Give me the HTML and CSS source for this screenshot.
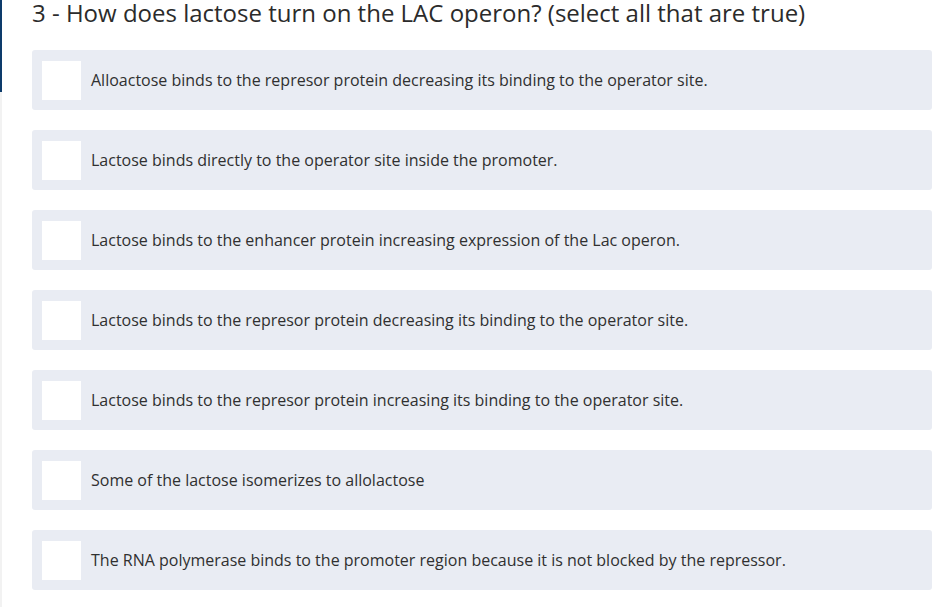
FILE: index.html
```html
<!DOCTYPE html>
<html lang="en">
<head>
<meta charset="utf-8">
<title>Quiz question</title>
<link rel="stylesheet" href="styles.css">
</head>
<body>
<div class="page">
  <aside class="edge">
    <div class="edge-top"></div>
    <div class="edge-rest"></div>
  </aside>
  <main class="question">
    <h1 class="title">3 - How does lactose turn on the LAC operon? (select all that are true)</h1>
    <ul class="answers">
      <li class="answer"><span class="box"></span><span class="label">Alloactose binds to the represor protein decreasing its binding to the operator site.</span></li>
      <li class="answer"><span class="box"></span><span class="label">Lactose binds directly to the operator site inside the promoter.</span></li>
      <li class="answer"><span class="box"></span><span class="label">Lactose binds to the enhancer protein increasing expression of the Lac operon.</span></li>
      <li class="answer"><span class="box"></span><span class="label">Lactose binds to the represor protein decreasing its binding to the operator site.</span></li>
      <li class="answer"><span class="box"></span><span class="label">Lactose binds to the represor protein increasing its binding to the operator site.</span></li>
      <li class="answer"><span class="box"></span><span class="label">Some of the lactose isomerizes to allolactose</span></li>
      <li class="answer"><span class="box"></span><span class="label">The RNA polymerase binds to the promoter region because it is not blocked by the repressor.</span></li>
    </ul>
  </main>
</div>
</body>
</html>
```

FILE: styles.css
```css
html, body {
  margin: 0;
  padding: 0;
  background: #ffffff;
}

body {
  font-family: "Open Sans", "Noto Sans", sans-serif;
  color: #2d2d2d;
}

.page {
  display: flex;
  width: 942px;
  height: 607px;
  overflow: hidden;
}

.edge {
  width: 2px;
  display: flex;
  flex-direction: column;
  flex-shrink: 0;
}

.edge-top {
  height: 92px;
  background: #0d3b6b;
}

.edge-rest {
  flex: 1;
  background: #f2f2f2;
}

.question {
  padding-left: 30px;
  width: 900px;
}

.title {
  margin: 0;
  font-size: 24px;
  font-weight: 400;
  line-height: 26px;
  color: #2b2b2b;
  white-space: nowrap;
}

.answers {
  list-style: none;
  margin: 24px 0 0 0;
  padding: 0;
  display: flex;
  flex-direction: column;
  gap: 20px;
}

.answer {
  height: 60px;
  background: #e9ecf3;
  border-radius: 3px;
  display: flex;
  align-items: center;
  padding-left: 10px;
  box-sizing: border-box;
}

.box {
  width: 39px;
  height: 39px;
  background: #ffffff;
  flex-shrink: 0;
}

.label {
  margin-left: 10px;
  font-size: 16px;
  color: #303030;
  white-space: nowrap;
}
```
